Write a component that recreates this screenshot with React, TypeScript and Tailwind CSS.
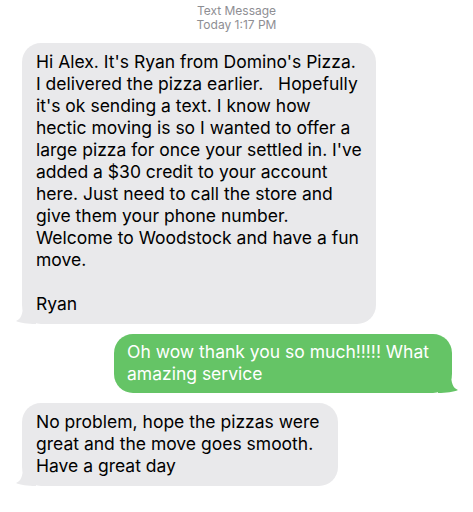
import React from "react";

const font = { fontFamily: "Inter, 'Noto Sans', sans-serif" };

function TailLeft({ color }: { color: string }) {
  return (
    <svg
      className="absolute -left-[6px] bottom-0"
      width="20"
      height="20"
      viewBox="0 0 20 20"
    >
      <path d="M20 0 L20 20 C12 20 4 19 0 17 C5 15 7 10 7 0 Z" fill={color} />
    </svg>
  );
}

function TailRight({ color }: { color: string }) {
  return (
    <svg
      className="absolute -right-[6px] bottom-0"
      width="20"
      height="20"
      viewBox="0 0 20 20"
    >
      <path d="M0 0 L0 20 C8 20 16 19 20 17 C15 15 13 10 13 0 Z" fill={color} />
    </svg>
  );
}

const firstLines = [
  "Hi Alex. It's Ryan from Domino's Pizza.",
  "I delivered the pizza earlier.   Hopefully",
  "it's ok sending a text. I know how",
  "hectic moving is so I wanted to offer a",
  "large pizza for once your settled in. I've",
  "added a $30 credit to your account",
  "here. Just need to call the store and",
  "give them your phone number.",
  "Welcome to Woodstock and have a fun",
  "move.",
  "\u00a0",
  "Ryan",
];

export default function App() {
  return (
    <div className="h-[512px] w-[473px] bg-white" style={font}>
      <div className="pt-[4px] text-center text-[12px] leading-[14px] text-[#8e8e93]">
        <p>Text Message</p>
        <p>Today 1:17 PM</p>
      </div>

      <div className="mt-[11px] flex flex-col gap-[10px] pl-[22px] pr-[21px]">
        <div className="relative self-start w-[354px] rounded-[19px] bg-[#e9e9eb] pb-[9px] pl-[14px] pr-[10px] pt-[8px] text-[17.5px] leading-[22px] text-black">
          <TailLeft color="#e9e9eb" />
          <div className="relative whitespace-pre">
            {firstLines.map((l, i) => (
              <div key={i}>{l}</div>
            ))}
          </div>
        </div>

        <div className="relative self-end w-[338px] rounded-[19px] bg-[#65c466] pb-[8px] pl-[13px] pr-[10px] pt-[7px] text-[17.5px] leading-[22px] text-white">
          <TailRight color="#65c466" />
          <div className="relative whitespace-pre">
            <div>Oh wow thank you so much!!!!! What</div>
            <div>amazing service</div>
          </div>
        </div>

        <div className="relative self-start w-[316px] rounded-[19px] bg-[#e9e9eb] pb-[9px] pl-[14px] pr-[10px] pt-[8px] text-[17.5px] leading-[22px] text-black">
          <TailLeft color="#e9e9eb" />
          <div className="relative whitespace-pre">
            <div>No problem, hope the pizzas were</div>
            <div>great and the move goes smooth.</div>
            <div>Have a great day</div>
          </div>
        </div>
      </div>
    </div>
  );
}
